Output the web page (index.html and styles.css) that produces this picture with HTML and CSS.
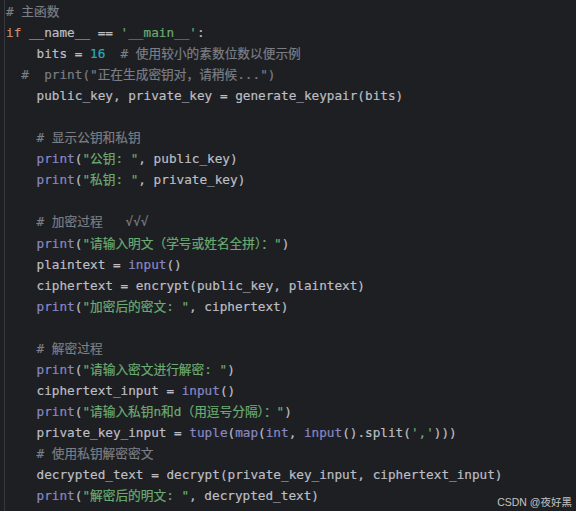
FILE: index.html
```html
<!DOCTYPE html>
<html lang="zh">
<head>
<meta charset="utf-8">
<link rel="stylesheet" href="styles.css">
</head>
<body>
<div class="editor">
<div class="ln"><span class="c"># 主函数</span></div>
<div class="ln"><span class="k">if</span> __name__ == <span class="s">'__main__'</span>:</div>
<div class="ln">    bits = <span class="n">16</span>  <span class="c"># 使用较小的素数位数以便示例</span></div>
<div class="ln"><span class="c">  #  print("正在生成密钥对，请稍候...")</span></div>
<div class="ln">    public_key, private_key = generate_keypair(bits)</div>
<div class="ln"></div>
<div class="ln">    <span class="c"># 显示公钥和私钥</span></div>
<div class="ln">    <span class="b">print</span>(<span class="s">"公钥: "</span>, public_key)</div>
<div class="ln">    <span class="b">print</span>(<span class="s">"私钥: "</span>, private_key)</div>
<div class="ln"></div>
<div class="ln">    <span class="c"># 加密过程   √√√</span></div>
<div class="ln">    <span class="b">print</span>(<span class="s">"请输入明文（学号或姓名全拼）："</span>)</div>
<div class="ln">    plaintext = <span class="b">input</span>()</div>
<div class="ln">    ciphertext = encrypt(public_key, plaintext)</div>
<div class="ln">    <span class="b">print</span>(<span class="s">"加密后的密文: "</span>, ciphertext)</div>
<div class="ln"></div>
<div class="ln">    <span class="c"># 解密过程</span></div>
<div class="ln">    <span class="b">print</span>(<span class="s">"请输入密文进行解密: "</span>)</div>
<div class="ln">    ciphertext_input = <span class="b">input</span>()</div>
<div class="ln">    <span class="b">print</span>(<span class="s">"请输入私钥n和d（用逗号分隔）："</span>)</div>
<div class="ln">    private_key_input = <span class="b">tuple</span>(<span class="b">map</span>(<span class="b">int</span>, <span class="b">input</span>().split(<span class="s">','</span>)))</div>
<div class="ln">    <span class="c"># 使用私钥解密密文</span></div>
<div class="ln">    decrypted_text = decrypt(private_key_input, ciphertext_input)</div>
<div class="ln">    <span class="b">print</span>(<span class="s">"解密后的明文: "</span>, decrypted_text)</div>
</div>
<div class="watermark">CSDN @夜好黑</div>
</body>
</html>
```

FILE: styles.css
```css
html, body {
  margin: 0;
  padding: 0;
  background: #1e1f22;
  width: 576px;
  height: 511px;
  overflow: hidden;
}
body {
  position: relative;
}
.editor {
  margin-left: 4px;
  border-left: 1px solid #36383d;
  padding-left: 1px;
  padding-top: 1px;
  height: 510px;
  font-family: "DejaVu Sans Mono", "Noto Sans CJK SC", monospace;
  font-size: 12.7px;
  color: #bcbec4;
  -webkit-text-stroke: 0.2px currentColor;
}
.ln {
  white-space: pre;
  height: 21.05px;
  line-height: 21.05px;
}
.k { color: #cf8e6d; }
.s { color: #6aab73; }
.n { color: #2aacb8; }
.c { color: #7a7e85; }
.b { color: #8888c6; }
.watermark {
  position: absolute;
  right: 4px;
  bottom: 1px;
  font-family: "Liberation Sans", "Noto Sans CJK SC", sans-serif;
  font-size: 10.5px;
  color: #c4c4c4;
  line-height: 16px;
}
```
